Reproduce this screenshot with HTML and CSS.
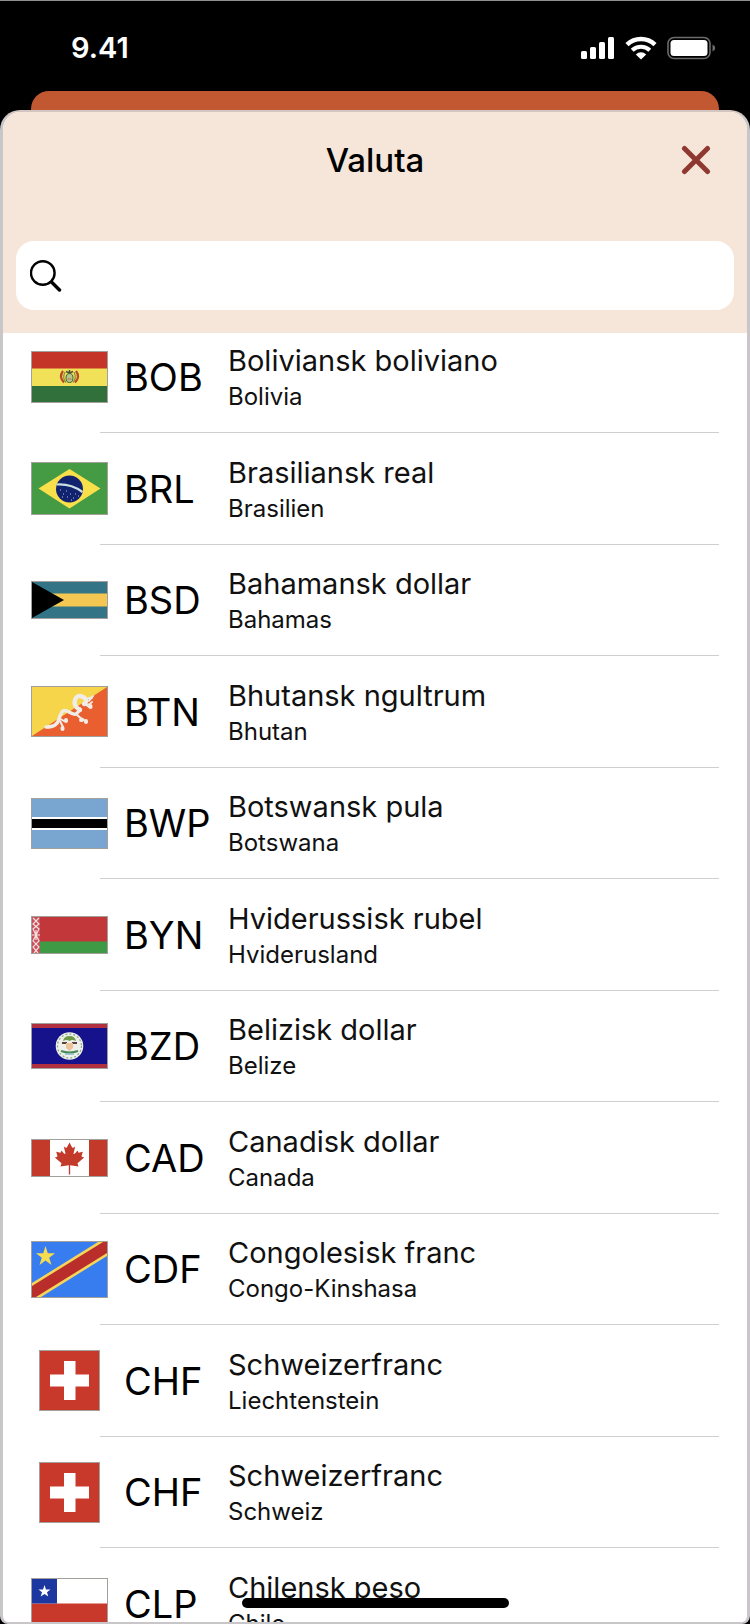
FILE: index.html
```html
<!DOCTYPE html>
<html lang="da">
<head>
    <meta charset="UTF-8">
    <meta name="viewport" content="width=device-width, initial-scale=1">
    <title>Valuta</title>
    <link rel="stylesheet" href="styles.css">
</head>
<body>
<div class="status">
    <span class="time">9.41</span>
    <div class="status-icons">
        <svg width="34" height="22" viewBox="0 0 34 22" fill="#fff">
            <rect x="0" y="14" width="6" height="8" rx="1.5"/>
            <rect x="9" y="10" width="6" height="12" rx="1.5"/>
            <rect x="18" y="5" width="6" height="17" rx="1.5"/>
            <rect x="27" y="0" width="6" height="22" rx="1.5"/>
        </svg>
        <svg width="32" height="24" viewBox="0 0 32 24" fill="none" stroke="#fff">
            <path d="M2 8.6A20.5 20.5 0 0 1 30 8.6" stroke-width="4.6"/>
            <path d="M7.2 14.2A13 13 0 0 1 24.8 14.2" stroke-width="4.2"/>
            <path d="M16 23.5L10.8 18.4A7.6 7.6 0 0 1 21.2 18.4Z" fill="#fff" stroke="none"/>
        </svg>
        <svg width="49" height="24" viewBox="0 0 49 24">
            <rect x="1" y="1.5" width="42" height="21" rx="6" fill="none" stroke="#6b6b6b" stroke-width="1.6"/>
            <rect x="3.5" y="4" width="37" height="16" rx="3.5" fill="#fff"/>
            <path d="M45.5 8.5Q48.3 9.5 48.3 12T45.5 15.5Z" fill="#6b6b6b"/>
        </svg>
    </div>
</div>
<div class="behind"></div>
<main class="sheet">
    <header class="head">
        <div class="bar">
            <h1 class="title">Valuta</h1>
            <button class="close" type="button" aria-label="Luk">
                <svg width="30" height="30" viewBox="0 0 30 30" stroke="#8d392f" stroke-width="5" stroke-linecap="round">
                    <path d="M3.5 3.5L26.5 26.5M26.5 3.5L3.5 26.5"/>
                </svg>
            </button>
        </div>
        <label class="search">
            <svg width="32" height="32" viewBox="0 0 32 32" fill="none" stroke="#000" stroke-linecap="round">
                <circle cx="12.8" cy="13" r="11.8" stroke-width="2.4"/>
                <path d="M22 22.500L29.500 30" stroke-width="3.4"/>
            </svg>
            <input class="search-input" type="search" aria-label="Søg valuta">
        </label>
    </header>
    <ul class="list">
        <li class="item">
            <button class="row" type="button">
                <span class="flag"><svg width="77" height="52" viewBox="0 0 75 50">
                    <rect width="75" height="50" fill="#f1e158"/>
                    <rect width="75" height="16.5" fill="#c53527"/>
                    <rect y="34" width="75" height="16" fill="#31703a"/>
                    <path d="M31 19Q26.5 25 32 30.5M44 19Q48.5 25 43 30.5" fill="none" stroke="#b8492a" stroke-width="2.2"/>
                    <path d="M33 20Q30 26 34 30.5M42 20Q45 26 41 30.5" fill="none" stroke="#8d8a34" stroke-width="1.2"/>
                    <ellipse cx="37.5" cy="26" rx="3.5" ry="4.5" fill="#b7c48b" stroke="#3f6b3d"/>
                    <path d="M34 19.5L37.5 21L41 19.5M37.5 18V21" fill="none" stroke="#4b5137" stroke-width="1.5"/>
                    <path d="M35.5 27H39.5" stroke="#c47338"/>
                </svg></span>
                <span class="code">BOB</span>
                <span class="info"><span class="name">Boliviansk boliviano</span><span class="country">Bolivia</span></span>
            </button>
        </li>
        <li class="item">
            <button class="row" type="button">
                <span class="flag"><svg width="77" height="53" viewBox="0 0 75 51">
                    <rect width="75" height="51" fill="#459b43"/>
                    <path d="M6.5 25.5L37.5 6L68.5 25.5L37.5 45.5Z" fill="#f9e04b"/>
                    <circle cx="37.5" cy="26" r="13.5" fill="#11236f"/>
                    <path d="M24.5 21.5Q39 20.5 50.5 29" fill="none" stroke="#c9dfe2" stroke-width="2.2"/>
                    <path d="M28 27h1M31 31h1M34 28h1M35 34h1M38 31h1M41 35h1M43 31h1M46 33h1M39 37h1M30 34h1" stroke="#b6c0dc" stroke-width="1"/>
                </svg></span>
                <span class="code">BRL</span>
                <span class="info"><span class="name">Brasiliansk real</span><span class="country">Brasilien</span></span>
            </button>
        </li>
        <li class="item">
            <button class="row" type="button">
                <span class="flag"><svg width="77" height="38" viewBox="0 0 75 36">
                    <rect width="75" height="36" fill="#337587"/>
                    <rect y="11.5" width="75" height="13" fill="#f3c751"/>
                    <path d="M0 0L32 18L0 36Z" fill="#000"/>
                </svg></span>
                <span class="code">BSD</span>
                <span class="info"><span class="name">Bahamansk dollar</span><span class="country">Bahamas</span></span>
            </button>
        </li>
        <li class="item">
            <button class="row" type="button">
                <span class="flag"><svg width="77" height="51" viewBox="0 0 75 49">
                    <rect width="75" height="49" fill="#f7d54b"/>
                    <path d="M75 0V49H0Z" fill="#e95f30"/>
                    <g fill="none" stroke="#f1ede6" stroke-linecap="round" stroke-linejoin="round">
                        <path d="M14 40Q20 40 23 38T27 32T30 25T37 25T44 27T48 22" stroke-width="3.4"/>
                        <path d="M48 23Q41 19 43 13T51 10T52 17" stroke-width="4.4"/>
                        <path d="M52 17Q57 19 60 15M54 13Q57 10 60 11M57 14L61 9" stroke-width="2"/>
                        <path d="M27 31L32 34M28 34L31 40M44 27Q48 31 52 33M53 17L57 20" stroke-width="2"/>
                        <path d="M30.500 42V41M34 34V33M49 33H50M54 34V35M58.500 20V19" stroke-width="4"/>
                    </g>
                </svg></span>
                <span class="code">BTN</span>
                <span class="info"><span class="name">Bhutansk ngultrum</span><span class="country">Bhutan</span></span>
            </button>
        </li>
        <li class="item">
            <button class="row" type="button">
                <span class="flag"><svg width="77" height="51" viewBox="0 0 75 49">
                    <rect width="75" height="49" fill="#78a6d1"/>
                    <rect y="18" width="75" height="13" fill="#fff"/>
                    <rect y="20" width="75" height="9" fill="#000"/>
                </svg></span>
                <span class="code">BWP</span>
                <span class="info"><span class="name">Botswansk pula</span><span class="country">Botswana</span></span>
            </button>
        </li>
        <li class="item">
            <button class="row" type="button">
                <span class="flag"><svg width="77" height="38" viewBox="0 0 75 36">
                    <rect width="75" height="36" fill="#c2383a"/>
                    <rect y="24.5" width="75" height="11.5" fill="#3f9a45"/>
                    <rect width="8" height="36" fill="#c9505a"/>
                    <path d="M1 1L7 7L1 12L4 18L1 24L7 30L2 36M7 1L1 7L7 12L4 18L7 24L1 30L6 36M0 18H8M4 13V23" fill="none" stroke="#f6dfe0" stroke-width="1.2"/>
                </svg></span>
                <span class="code">BYN</span>
                <span class="info"><span class="name">Hviderussisk rubel</span><span class="country">Hviderusland</span></span>
            </button>
        </li>
        <li class="item">
            <button class="row" type="button">
                <span class="flag"><svg width="77" height="46" viewBox="0 0 75 44">
                    <rect width="75" height="44" fill="#b0303f"/>
                    <rect y="4" width="75" height="36" fill="#15128c"/>
                    <circle cx="37.5" cy="22" r="13.8" fill="#eef1ea"/>
                    <circle cx="37.5" cy="22" r="12" fill="none" stroke="#8aa886" stroke-width="1.2" stroke-dasharray="2 2"/>
                    <path d="M31 17Q32 12 37.5 12T44 17Q40 15 37.5 17Q35 15 31 17Z" fill="#6f9a49"/>
                    <path d="M30 19h5M40 19h5" stroke="#59443a" stroke-width="2"/>
                    <path d="M34 19h7v5l-3.5 3l-3.5-3z" fill="#edc39a"/>
                    <path d="M29 27Q37.5 30 46 27" fill="none" stroke="#4b8b57" stroke-width="2"/>
                    <path d="M33 30H42" stroke="#88b7c4" stroke-width="1.5"/>
                </svg></span>
                <span class="code">BZD</span>
                <span class="info"><span class="name">Belizisk dollar</span><span class="country">Belize</span></span>
            </button>
        </li>
        <li class="item">
            <button class="row" type="button">
                <span class="flag"><svg width="77" height="38" viewBox="0 0 75 36">
                    <rect width="75" height="36" fill="#fff"/>
                    <path d="M0 0H18V36H0ZM57 0H75V36H57Z" fill="#c33a2a"/>
                    <path transform="translate(37.5 2.5) scale(.333)" d="M0 0L8 15Q10 17 17 12L12 34Q14 37 24 24L27 31L40 28L36 41Q37 44 44 45L24 62L27 72L2 68L2 96H-2L-2 68L-27 72L-24 62L-44 45Q-37 44 -36 41L-40 28L-27 31L-24 24Q-14 37 -12 34L-17 12Q-10 17 -8 15Z" fill="#c33a2a"/>
                </svg></span>
                <span class="code">CAD</span>
                <span class="info"><span class="name">Canadisk dollar</span><span class="country">Canada</span></span>
            </button>
        </li>
        <li class="item">
            <button class="row" type="button">
                <span class="flag"><svg width="77" height="57" viewBox="0 0 75 55">
                    <rect width="75" height="55" fill="#377df0"/>
                    <path d="M0 41L66 0H75V14L9 55H0Z" fill="#f6d558"/>
                    <path d="M0 44L71 0H75V11L4 55H0Z" fill="#b92d2b"/>
                    <path d="M13.5 4L15.8 11.3H23L17.2 15.7L19.5 23L13.5 18.5L7.5 23L9.8 15.7L4 11.3H11.2Z" fill="#f6dc50"/>
                </svg></span>
                <span class="code">CDF</span>
                <span class="info"><span class="name">Congolesisk franc</span><span class="country">Congo-Kinshasa</span></span>
            </button>
        </li>
        <li class="item">
            <button class="row" type="button">
                <span class="flag"><svg width="61" height="61" viewBox="0 0 59 59">
                    <rect width="59" height="59" fill="#c8392b"/>
                    <path d="M24 10H35.5V23.5H49V35.5H35.5V49H24V35.5H10V23.5H24Z" fill="#fff"/>
                </svg></span>
                <span class="code">CHF</span>
                <span class="info"><span class="name">Schweizerfranc</span><span class="country">Liechtenstein</span></span>
            </button>
        </li>
        <li class="item">
            <button class="row" type="button">
                <span class="flag"><svg width="61" height="61" viewBox="0 0 59 59">
                    <rect width="59" height="59" fill="#c8392b"/>
                    <path d="M24 10H35.5V23.5H49V35.5H35.5V49H24V35.5H10V23.5H24Z" fill="#fff"/>
                </svg></span>
                <span class="code">CHF</span>
                <span class="info"><span class="name">Schweizerfranc</span><span class="country">Schweiz</span></span>
            </button>
        </li>
        <li class="item">
            <button class="row" type="button">
                <span class="flag"><svg width="77" height="51" viewBox="0 0 75 49">
                    <rect width="75" height="49" fill="#fff"/>
                    <rect y="24.5" width="75" height="24.5" fill="#c8392b"/>
                    <rect width="25" height="24.5" fill="#1c37a0"/>
                    <path d="M12.5 6L14 10.5H18.5L15 13.2L16.3 17.5L12.5 15L8.7 17.5L10 13.2L6.5 10.5H11Z" fill="#fff"/>
                </svg></span>
                <span class="code">CLP</span>
                <span class="info"><span class="name">Chilensk peso</span><span class="country">Chile</span></span>
            </button>
        </li>
    </ul>
</main>
<div class="home"></div>
</body>
</html>
```
FILE: styles.css
```css
*{ margin: 0; padding: 0; box-sizing: border-box;}
body { height: 100vh; display: flex; flex-direction: column; overflow: hidden;
    background: #000; color: #000; border-top: 1px solid #8c9090;
    font-family: Inter, "Liberation Sans", sans-serif;}
svg { display: block; flex: none;}
button, input { font: inherit; color: inherit; border: 0; background: none;}
button { cursor: pointer;}

.status { height: 90px; padding: 4px 34px 0 71px; display: flex; flex: none;
    align-items: center; justify-content: space-between;}
.time { color: #fff; font-size: 29px; line-height: 36px; font-weight: 600;}
.status-icons { display: flex; align-items: center; gap: 10px;}
.behind { flex: none; height: 40px; margin: 0 31px -21px; background: #c15832;
    border-radius: 18px 18px 0 0;}

.sheet { position: relative; flex: 1; min-height: 0; display: flex; flex-direction: column;
    overflow: hidden; background: #fff; border: 3px solid #c8c6c8; border-top: 2px solid #d3c5bf;
    border-bottom-width: 2px; border-radius: 20px 20px 8px 8px;}
.head { flex: none; padding: 0 13px 23px; background: #f6e5d9;}
.bar { display: grid; grid-template-columns: 1fr auto 1fr; align-items: center;
    height: 129px; padding: 0 23px 34px;}
.title { grid-column: 2; font-size: 33px; line-height: 40px; font-weight: 500;}
.close { justify-self: end;}
.search { display: flex; align-items: center; gap: 12px; height: 69px; padding: 0 14px;
    background: #fff; border-radius: 18px;}
.search-input { flex: 1; min-width: 0; font-size: 30px; outline: none;}

.list { flex: 1; min-height: 0; overflow-y: auto; scrollbar-width: none; list-style: none;}
.item { display: flex; flex-direction: column; height: 111px; padding: 0 28px;}
.item:nth-child(even) { height: 112px;}
/* list is scrolled a little under the header */
.item:first-child { margin-top: -11px;}
.item::after { content: ""; height: 1px; margin-left: 69px; background: #cfcfcf;}
.row { flex: 1; display: grid; grid-template-columns: 77px 88px 1fr; column-gap: 16px;
    align-items: center; text-align: left;}
.flag { display: flex; justify-content: center;}
.flag svg { border: 1px solid #a3a09c;}
.code { font-size: 38px; line-height: 48px; white-space: nowrap;}
.info { display: flex; flex-direction: column; padding-top: 4px; color: #111;}
.name { font-size: 29px; line-height: 36px;}
.country { font-size: 24px; line-height: 36px;}

.home { position: absolute; left: 50%; bottom: 16px; width: 267px; height: 10px;
    margin-left: -133px; background: #000; border-radius: 5px;}
```
